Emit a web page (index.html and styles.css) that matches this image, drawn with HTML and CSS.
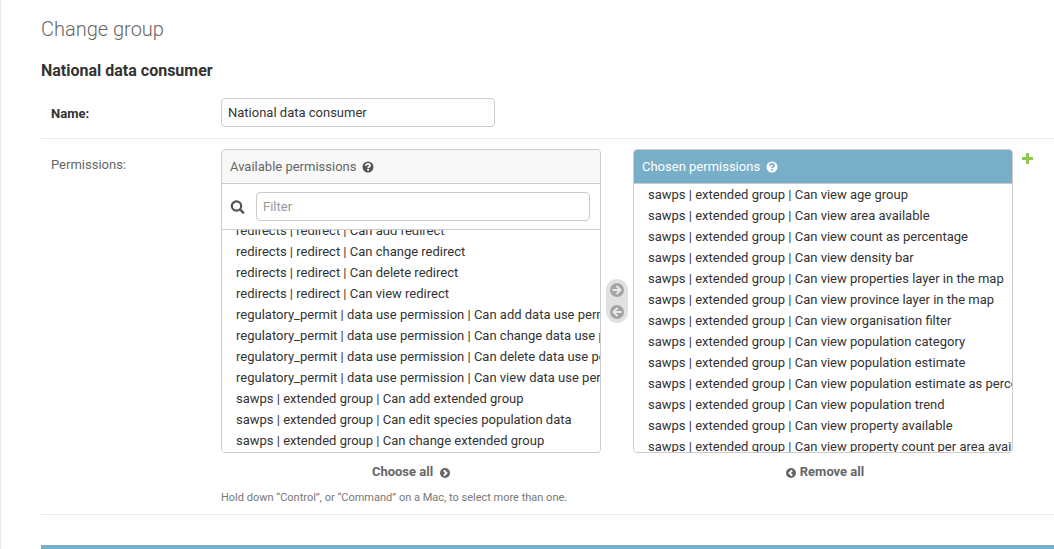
FILE: index.html
```html
<!DOCTYPE html>
<html lang="en">
<head>
<meta charset="utf-8">
<meta name="viewport" content="width=device-width, initial-scale=1">
<title>Change group</title>
<link rel="stylesheet" href="styles.css">
</head>
<body>
<main class="content">
  <h1 class="page-title">Change group</h1>
  <h2 class="object-name">National data consumer</h2>
  <form class="group-form">
    <div class="form-row">
      <label class="row-label required" for="name">Name:</label>
      <input class="text-input name-input" id="name" type="text" value="National data consumer">
    </div>
    <div class="form-row permissions-row">
      <label class="row-label" for="chosen">Permissions:</label>
      <div class="field">
        <div class="related-wrapper">
          <div class="selector">
            <section class="selector-box">
              <div class="panel">
                <div class="panel-title">
                  <label for="available">Available permissions</label>
                  <svg class="help-icon" viewBox="0 0 12 12" aria-hidden="true"><circle cx="6" cy="6" r="5.5" fill="currentColor"/><path class="mark" d="M3.900 4.900C4 3.400 4.900 2.900 6 2.900c1.200 0 2 .7 2 1.600C8 5.800 6.100 5.700 6.100 7.200M6.100 8v1.700"/></svg>
                </div>
                <div class="filter-bar">
                  <label for="filter"><svg class="search-icon" viewBox="0 0 16 16" role="img" aria-label="Filter"><circle cx="6.500" cy="7" r="4.700" fill="none" stroke="currentColor" stroke-width="2.200"/><path d="M10.200 10.700 13.200 13.700" stroke="currentColor" stroke-width="2.400" stroke-linecap="round"/></svg></label>
                  <input class="text-input filter-input" id="filter" type="text" placeholder="Filter">
                </div>
                <select class="options available-options" id="available" multiple>
                  <option>redirects | redirect | Can add redirect</option>
                  <option>redirects | redirect | Can change redirect</option>
                  <option>redirects | redirect | Can delete redirect</option>
                  <option>redirects | redirect | Can view redirect</option>
                  <option>regulatory_permit | data use permission | Can add data use permission</option>
                  <option>regulatory_permit | data use permission | Can change data use permission</option>
                  <option>regulatory_permit | data use permission | Can delete data use permission</option>
                  <option>regulatory_permit | data use permission | Can view data use permission</option>
                  <option>sawps | extended group | Can add extended group</option>
                  <option>sawps | extended group | Can edit species population data</option>
                  <option>sawps | extended group | Can change extended group</option>
                </select>
              </div>
              <a class="bulk-link choose-link" href="#">Choose all <svg class="bulk-icon" viewBox="0 0 10 10" aria-hidden="true"><circle cx="5" cy="5" r="5" fill="currentColor"/><path class="chevron" d="M3.800 2.300 6.500 5 3.800 7.700"/></svg></a>
            </section>
            <div class="chooser">
              <button class="move" type="button" aria-label="Choose"><svg viewBox="0 0 14 14"><circle cx="7" cy="7" r="7" fill="currentColor"/><path class="arrow" d="M2.500 7H10M6.500 3 10.500 7 6.500 11"/></svg></button>
              <button class="move" type="button" aria-label="Remove"><svg viewBox="0 0 14 14"><circle cx="7" cy="7" r="7" fill="currentColor"/><path class="arrow" d="M11.500 7H4M7.500 3 3.500 7l4 4"/></svg></button>
            </div>
            <section class="selector-box">
              <div class="panel">
                <div class="panel-title chosen-title">
                  <label for="chosen">Chosen permissions</label>
                  <svg class="help-icon" viewBox="0 0 12 12" aria-hidden="true"><circle cx="6" cy="6" r="5.500" fill="currentColor"/><path class="mark" d="M3.900 4.900C4 3.400 4.900 2.900 6 2.900c1.200 0 2 .7 2 1.600C8 5.800 6.100 5.700 6.100 7.200M6.100 8v1.700"/></svg>
                </div>
                <select class="options" id="chosen" multiple>
                  <option>sawps | extended group | Can view age group</option>
                  <option>sawps | extended group | Can view area available</option>
                  <option>sawps | extended group | Can view count as percentage</option>
                  <option>sawps | extended group | Can view density bar</option>
                  <option>sawps | extended group | Can view properties layer in the map</option>
                  <option>sawps | extended group | Can view province layer in the map</option>
                  <option>sawps | extended group | Can view organisation filter</option>
                  <option>sawps | extended group | Can view population category</option>
                  <option>sawps | extended group | Can view population estimate</option>
                  <option>sawps | extended group | Can view population estimate as percentage</option>
                  <option>sawps | extended group | Can view population trend</option>
                  <option>sawps | extended group | Can view property available</option>
                  <option>sawps | extended group | Can view property count per area available</option>
                </select>
              </div>
              <a class="bulk-link remove-link" href="#"><svg class="bulk-icon" viewBox="0 0 10 10" aria-hidden="true"><circle cx="5" cy="5" r="5" fill="currentColor"/><path class="chevron" d="M6.200 2.300 3.500 5 6.200 7.700"/></svg>Remove all</a>
            </section>
          </div>
          <a class="add-link" href="#" aria-label="Add permission"><svg viewBox="0 0 11 11"><path d="M4 0h3v4h4v3H7v4H4V7H0V4h4z" fill="#8ccb52"/></svg></a>
        </div>
        <p class="help-text">Hold down “Control”, or “Command” on a Mac, to select more than one.</p>
      </div>
    </div>
    <div class="module-bar"></div>
  </form>
</main>
<script src="script.js"></script>
</body>
</html>
```
FILE: styles.css
```css
* { box-sizing: border-box; }

body {
  margin: 0;
  background: #fff;
  color: #333;
  font-family: Roboto, "Liberation Sans", sans-serif;
  font-size: 13px;
}

.content {
  min-height: 100vh;
  padding: 16px 0 0 40px;
  border-left: 1px solid #eaeaea;
}

.page-title {
  margin: 0 0 16px;
  color: #666;
  font-size: 20px;
  font-weight: 300;
  line-height: 26px;
}

.object-name {
  margin: 0 0 4px;
  font-size: 16px;
  line-height: 26px;
}

.form-row {
  display: flex;
  align-items: flex-start;
  padding: 10px 0 11px 10px;
  border-bottom: 1px solid #eaeaea;
}

.row-label {
  flex: 0 0 170px;
  padding-top: 8px;
  color: #666;
  line-height: 16px;
}

.required {
  color: #333;
  font-weight: bold;
}

.permissions-row { padding-bottom: 8px; }

.field {
  flex: 1;
  min-width: 0;
}

.text-input {
  height: 29px;
  padding: 4px 6px;
  border: 1px solid #ccc;
  border-radius: 4px;
  background: #fff;
  color: #333;
  font: inherit;
}

.name-input { width: 274px; }

.related-wrapper,
.selector {
  display: flex;
  align-items: flex-start;
}

.selector {
  flex: 0 1 792px;
  min-width: 0;
}

.selector-box {
  display: flex;
  flex: 1;
  flex-direction: column;
  align-items: center;
  min-width: 0;
}

.panel {
  display: flex;
  flex-direction: column;
  width: 100%;
  height: 304px;
  overflow: hidden;
  border: 1px solid #ccc;
  border-radius: 4px;
}

.panel-title {
  display: flex;
  flex: 0 0 34px;
  align-items: center;
  gap: 6px;
  padding: 0 8px;
  border-bottom: 1px solid #ccc;
  background: #f8f8f8;
  color: #666;
}

.chosen-title {
  background: #79aec8;
  color: #fff;
}

.help-icon {
  width: 12px;
  height: 12px;
}

.panel-title .help-icon { color: #555; }
.chosen-title .help-icon { color: #fff; }

.mark {
  fill: none;
  stroke: #f8f8f8;
  stroke-width: 1.8;
}

.chosen-title .mark { stroke: #79aec8; }

.filter-bar {
  display: flex;
  align-items: center;
  gap: 10px;
  padding: 8px 10px 8px 8px;
  border-bottom: 1px solid #ccc;
}

.search-icon {
  display: block;
  width: 16px;
  height: 16px;
  color: #555;
}

.filter-input {
  flex: 1;
  min-width: 0;
}

.filter-input::placeholder { color: #999; }

.options {
  flex: 1;
  width: 100%;
  min-height: 0;
  padding: 0;
  border: 0;
  outline: 0;
  overflow: hidden auto;
  background: #fff;
  color: #333;
  font: inherit;
  scrollbar-width: none;
}

.options option {
  height: 21px;
  min-height: 21px;
  padding: 3px 14px;
}

.available-options { padding-bottom: 8px; }

.chooser {
  display: flex;
  flex: 0 0 22px;
  flex-direction: column;
  gap: 8px;
  margin: 130px 5px 0;
  padding: 4px;
  border-radius: 11px;
  background: #e1e1e1;
}

.move {
  width: 14px;
  height: 14px;
  padding: 0;
  border: 0;
  background: none;
  color: #a4a4a4;
}

.move svg,
.add-link svg { display: block; }

.arrow {
  fill: none;
  stroke: #e8e8e8;
  stroke-width: 2;
}

.bulk-link {
  display: flex;
  align-items: center;
  margin-top: 10px;
  color: #666;
  font-weight: bold;
  line-height: 18px;
  text-decoration: none;
}

.choose-link { gap: 7px; }

.remove-link {
  gap: 4px;
  padding-left: 4px;
}

.bulk-icon {
  width: 10px;
  height: 10px;
  margin-top: 2px;
}

.chevron {
  fill: none;
  stroke: #fff;
  stroke-width: 1.9;
}

.add-link {
  flex: 0 0 11px;
  width: 11px;
  margin: 4px 0 0 9px;
}

.help-text {
  margin: 9px 0 0;
  color: #777;
  font-size: 11px;
  line-height: 16px;
}

.module-bar {
  height: 4px;
  margin-top: 30px;
  background: #79aec8;
}
```
FILE: script.js
```js
document.getElementById('available').scrollTop = 10;
```
